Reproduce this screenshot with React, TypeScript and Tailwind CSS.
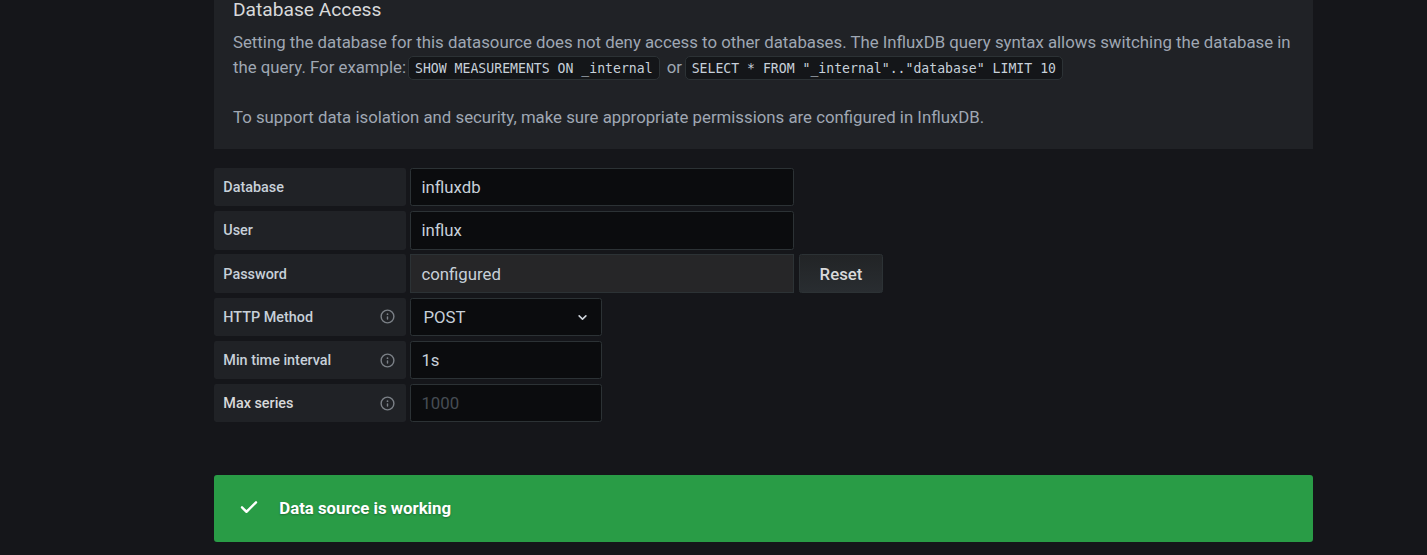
import type { ReactNode } from "react";

function InfoIcon({ raised = false }: { raised?: boolean }) {
  return (
    <svg viewBox="0 0 24 24" className={`block h-[17px] w-[17px] shrink-0 fill-[#7b8087] ${raised ? "mb-px" : ""}`}>
      <path d="M12,2A10,10,0,1,0,22,12,10.01114,10.01114,0,0,0,12,2Zm0,18a8,8,0,1,1,8-8A8.00917,8.00917,0,0,1,12,20Zm0-8.5a1,1,0,0,0-1,1v3a1,1,0,0,0,2,0v-3A1,1,0,0,0,12,11.5Zm0-4a1.25,1.25,0,1,0,1.25,1.25A1.25,1.25,0,0,0,12,7.5Z" />
    </svg>
  );
}

function Label({ children, icon }: { children: ReactNode; icon?: ReactNode }) {
  return (
    <div className="mr-1 flex h-full w-[192px] shrink-0 items-center justify-between rounded-[2.4px] bg-[#202226] pr-[10px] pl-[9.3px] text-[14.4px] leading-[22px] font-medium">
      <span>{children}</span>
      {icon}
    </div>
  );
}

function Code({ children }: { children: ReactNode }) {
  return (
    <code className="inline-block h-[24px] rounded-[5px] border border-[#2c3235] bg-[#141619] px-[6px] align-[-6px] font-['DejaVu_Sans_Mono',monospace] text-[13.16px] leading-[24px] whitespace-pre text-[#c7d0d9]">
      {children}
    </code>
  );
}

const field = "flex h-full items-center rounded-[2.4px] border border-[#2c3235] pl-[10.4px] leading-[26px]";

export default function App() {
  return (
    <div className="h-[555px] overflow-hidden bg-[#15161a] pl-[214px] font-[Roboto,sans-serif] text-[16.8px] text-[#c7d0d9]">
      <div className="w-[1099px]">
        <section className="h-[149px] bg-[#202226] pl-[19px] leading-[25px] text-[#9fa7b3]">
          <h5 className="h-[30px] text-[19.2px] leading-[19px] font-normal text-[#d8d9da]">Database Access</h5>
          <p className="whitespace-nowrap">
            Setting the database for this datasource does not deny access to other databases. The InfluxDB query syntax allows switching the database in
          </p>
          <div className="flex h-[25px] items-center whitespace-nowrap">
            <span className="w-[175px]">the query. For example:</span>
            <Code>SHOW MEASUREMENTS ON _internal</Code>
            <span className="ml-[7px] w-[18px]">or</span>
            <Code>{'SELECT * FROM "_internal".."database" LIMIT 10'}</Code>
          </div>
          <p className="mt-[25px]">To support data isolation and security, make sure appropriate permissions are configured in InfluxDB.</p>
        </section>

        <form className="mt-[19px] flex flex-col">
          <div className="mb-[5px] flex h-[38px]">
            <Label><span className="block pt-px">Database</span></Label>
            <div className={`${field} w-[384px] bg-[#0b0c0e] pb-px`}>influxdb</div>
          </div>
          <div className="mb-1 flex h-[39px]">
            <Label>User</Label>
            <div className={`${field} w-[384px] bg-[#0b0c0e] pb-[2px]`}>influx</div>
          </div>
          <div className="mb-[5px] flex h-[39px]">
            <Label><span className="block pt-[2px]">Password</span></Label>
            <div className="flex h-full w-[384px] items-center border border-[#2c3235] bg-[#262628] pt-px pl-[10.4px] leading-[26px]">configured</div>
            <button type="button" className="ml-[5px] h-full w-[84px] rounded-[2.4px] border border-[#2c3235] bg-linear-to-b from-[#222426] to-[#292d31] pt-[2px] font-medium text-[#d8d9da]">
              Reset
            </button>
          </div>
          <div className="mb-[5px] flex h-[38px]">
            <Label icon={<InfoIcon raised />}><span className="block pt-px">HTTP Method</span></Label>
            <div className="flex h-full w-[192px] items-center justify-between rounded-[2.4px] border border-[#2c3235] bg-[#0b0c0e] pr-[9.5px] pl-[12.4px] leading-[26px]">
              <span className="pb-px">POST</span>
              <svg viewBox="0 0 24 24" className="mt-px h-[19px] w-[19px] fill-[#d0d6dc]">
                <path d="M17,9.17a1,1,0,0,0-1.41,0L12,12.71,8.46,9.17a1,1,0,0,0-1.41,0,1,1,0,0,0,0,1.42l4.24,4.24a1,1,0,0,0,1.42,0L17,10.59A1,1,0,0,0,17,9.17Z" />
              </svg>
            </div>
          </div>
          <div className="mb-[5px] flex h-[38px]">
            <Label icon={<InfoIcon />}><span className="block pt-px">Min time interval</span></Label>
            <div className={`${field} w-[192px] bg-[#0b0c0e] pb-px`}>1s</div>
          </div>
          <div className="flex h-[38px]">
            <Label icon={<InfoIcon />}><span className="block pt-px text-[#d8d9da]">Max series</span></Label>
            <div className={`${field} w-[192px] bg-[#0b0c0e] pb-px text-[#464c54]`}>1000</div>
          </div>
        </form>

        <div className="mt-[53px] flex h-[67px] items-center rounded-[3px] bg-[#299c46] pl-[20.6px] text-white">
          <svg viewBox="0 0 24 24" className="mb-[3px] h-[28px] w-[28px] fill-white">
            <path d="M18.71,7.21a1,1,0,0,0-1.42,0L9.84,14.67,6.71,11.53A1,1,0,1,0,5.29,13l3.84,3.84a1,1,0,0,0,1.42,0l8.16-8.16A1,1,0,0,0,18.71,7.21Z" />
          </svg>
          <span className="ml-[16.7px] font-bold [text-shadow:0_1px_2px_rgba(0,0,0,0.3)]">Data source is working</span>
        </div>
      </div>
    </div>
  );
}
